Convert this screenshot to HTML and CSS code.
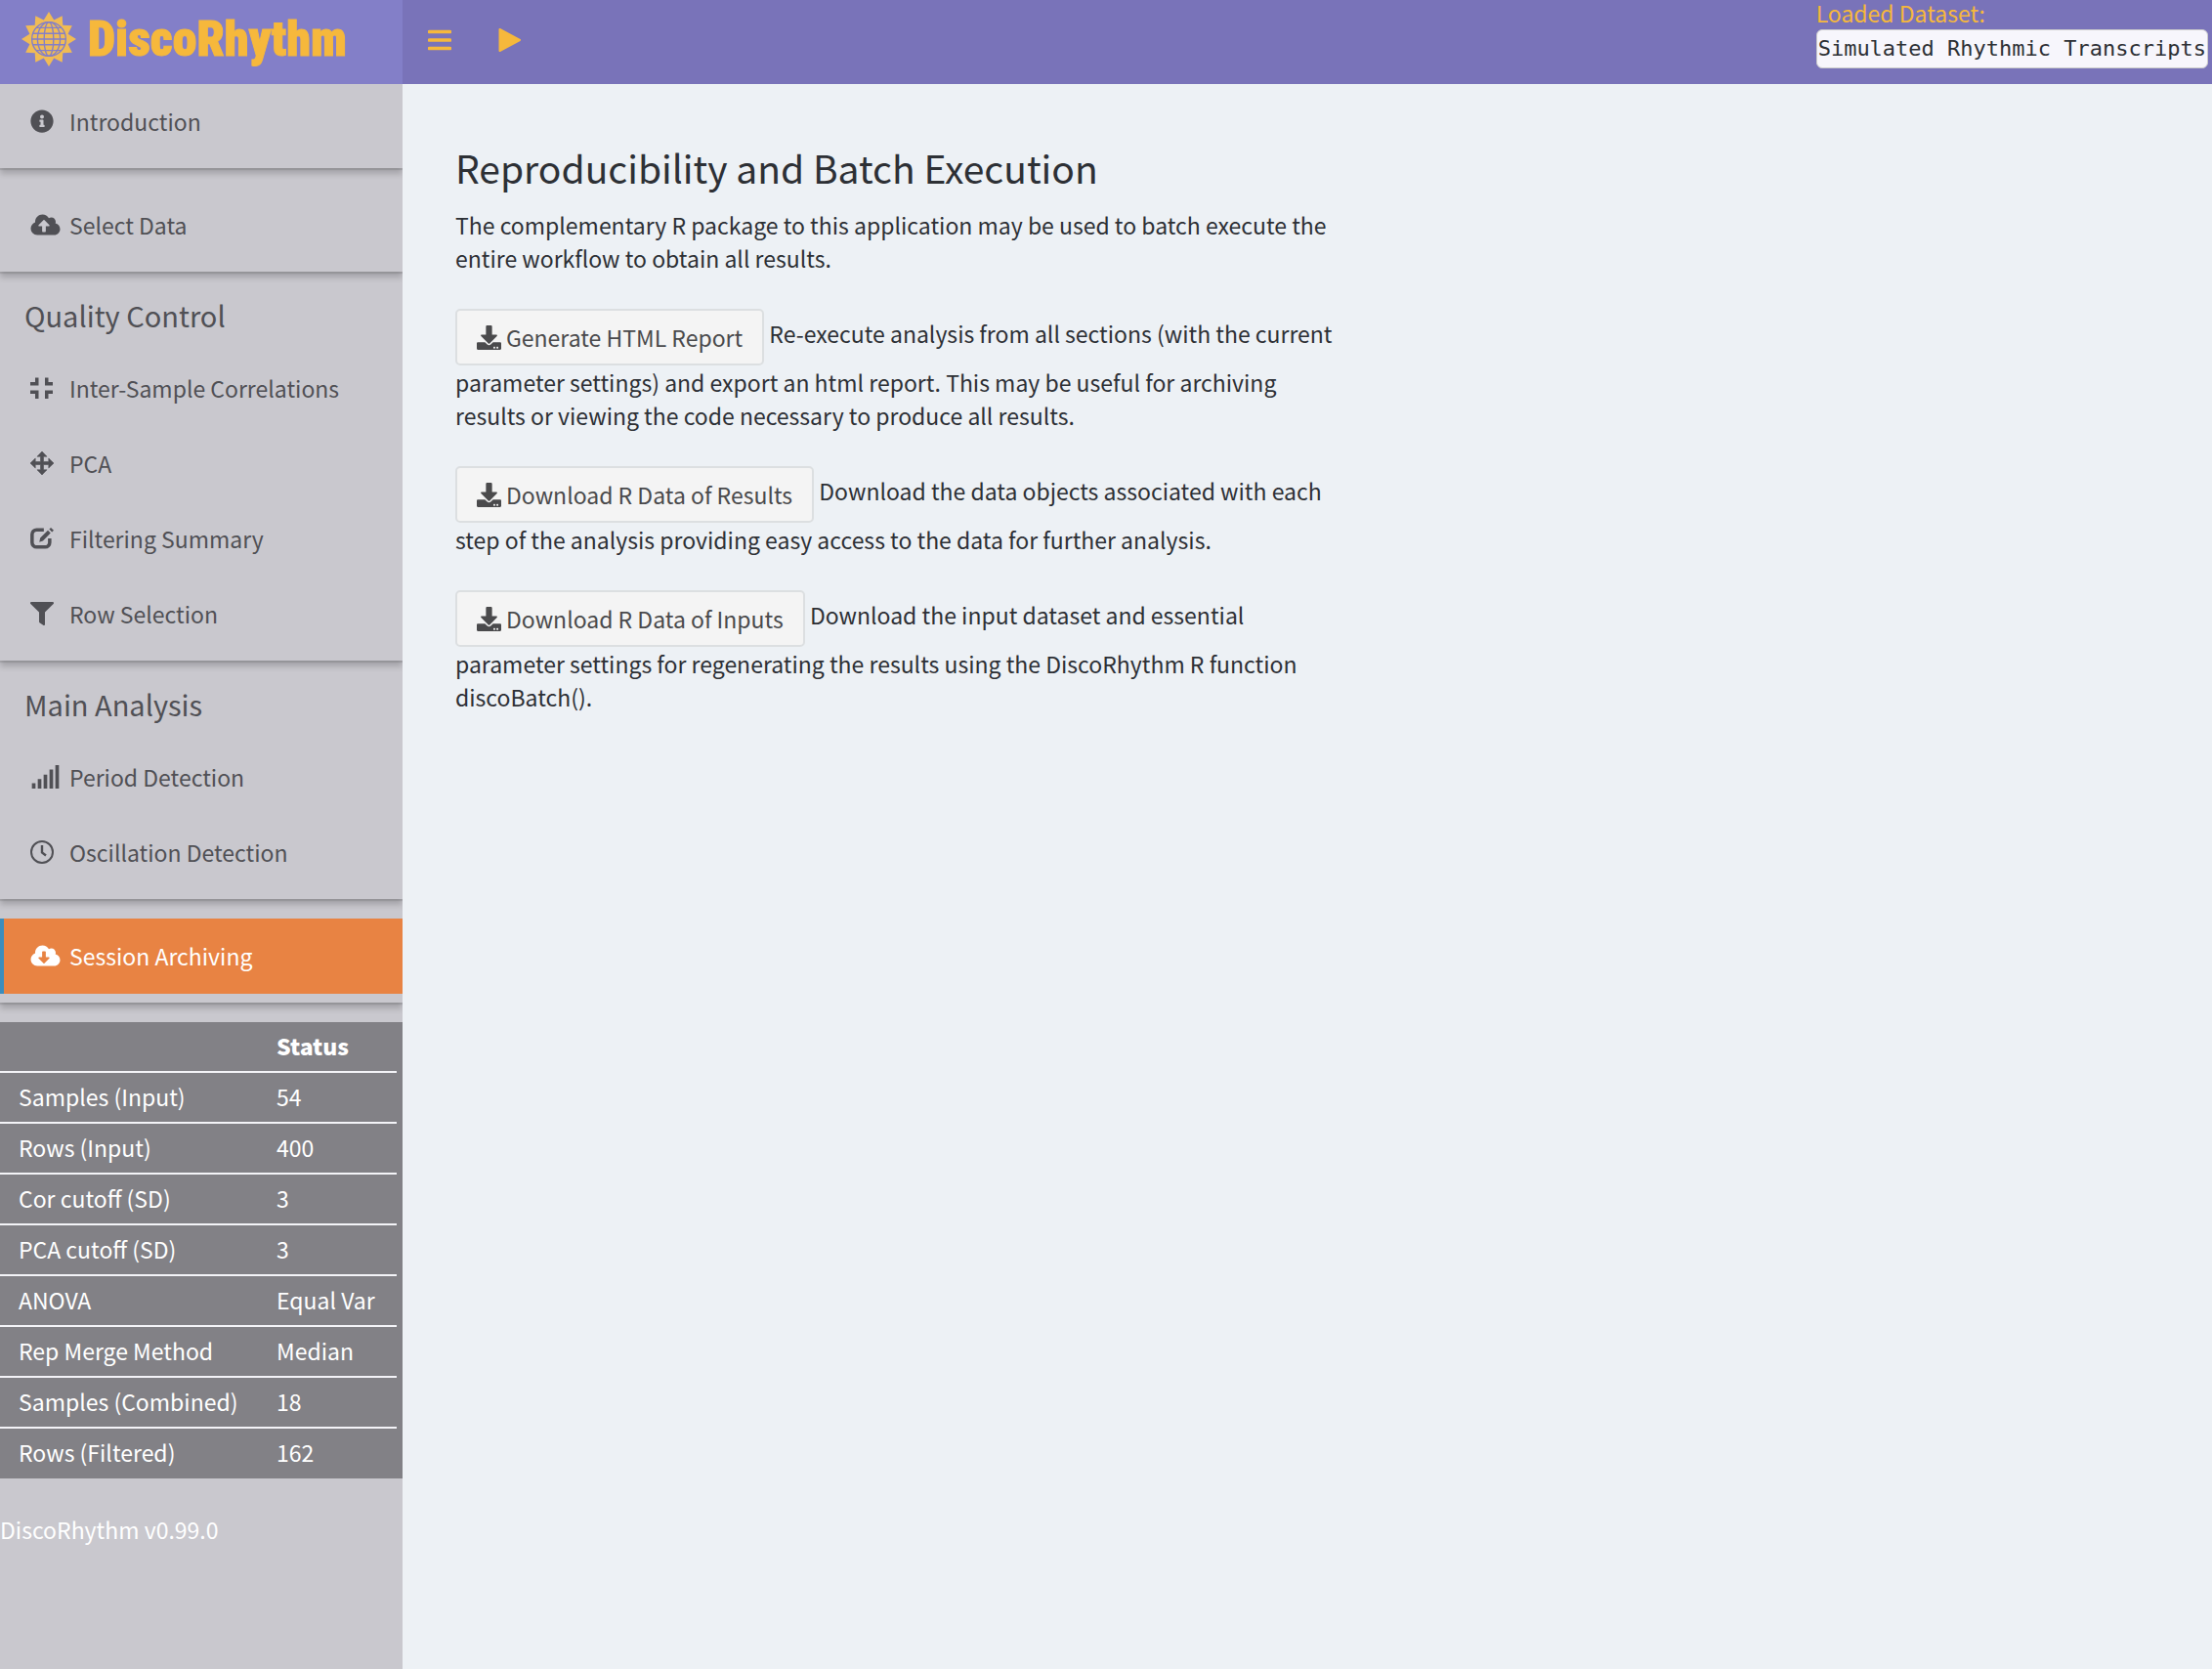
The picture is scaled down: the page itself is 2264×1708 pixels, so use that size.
FILE: index.html
```html
<!DOCTYPE html>
<html lang="en">
<head>
<meta charset="utf-8">
<title>DiscoRhythm</title>
<link rel="stylesheet" href="styles.css">
</head>
<body>
<svg class="defs" aria-hidden="true">
  <symbol id="info" viewBox="0 0 512 512"><path d="M256 8C119.043 8 8 119.083 8 256c0 136.997 111.043 248 248 248s248-111.003 248-248C504 119.083 392.957 8 256 8zm0 110c23.196 0 42 18.804 42 42s-18.804 42-42 42-42-18.804-42-42 18.804-42 42-42zm56 254c0 6.627-5.373 12-12 12h-88c-6.627 0-12-5.373-12-12v-24c0-6.627 5.373-12 12-12h12v-64h-12c-6.627 0-12-5.373-12-12v-24c0-6.627 5.373-12 12-12h64c6.627 0 12 5.373 12 12v100h12c6.627 0 12 5.373 12 12v24z"/></symbol>
  <symbol id="cloud-up" viewBox="0 0 640 512"><path d="M537.6 226.6c4.1-10.7 6.4-22.4 6.4-34.6 0-53-43-96-96-96-19.7 0-38.1 6-53.3 16.2C367 64.2 315.3 32 256 32c-88.4 0-160 71.6-160 160 0 2.7.1 5.4.2 8.1C40.2 219.8 0 273.2 0 336c0 79.5 64.5 144 144 144h368c70.7 0 128-57.3 128-128 0-61.9-44-113.6-102.4-125.4zM393.4 288H328v112c0 8.8-7.2 16-16 16h-48c-8.8 0-16-7.2-16-16V288h-65.4c-14.3 0-21.4-17.2-11.3-27.4l105.4-105.4c6.2-6.2 16.4-6.2 22.6 0l105.4 105.4c10.1 10.2 2.9 27.4-11.3 27.4z"/></symbol>
  <symbol id="cloud-down" viewBox="0 0 640 512"><path d="M537.6 226.6c4.1-10.7 6.4-22.4 6.4-34.6 0-53-43-96-96-96-19.7 0-38.1 6-53.3 16.2C367 64.2 315.3 32 256 32c-88.4 0-160 71.6-160 160 0 2.7.1 5.4.2 8.1C40.2 219.8 0 273.2 0 336c0 79.5 64.5 144 144 144h368c70.7 0 128-57.3 128-128 0-61.9-44-113.6-102.4-125.4zm-132.9 88.7L299.3 420.7c-6.2 6.2-16.4 6.2-22.6 0L171.3 315.3c-10.1-10.1-2.9-27.3 11.3-27.3H248V176c0-8.8 7.2-16 16-16h48c8.8 0 16 7.2 16 16v112h65.4c14.2 0 21.4 17.2 11.3 27.3z"/></symbol>
  <symbol id="compress" viewBox="0 0 24 24"><path d="M0 6h5V1.500h3.500v8H0zM15 1.500h3.500V6h4.500v3.500h-8zM0 14.500h8.500v8.500H5v-5H0zM15 14.500h8v3.500h-4.500v5H15z"/></symbol>
  <symbol id="arrows" viewBox="0 0 24 24"><path d="M12 0l5 5.200h-3.500v5.300h5.300V7L24 12l-5.200 5v-3.500h-5.300v5.300H17L12 24l-5-5.200h3.500v-5.300H5.200V17L0 12l5.200-5v3.500h5.300V5.200H7z" stroke="currentColor" stroke-width=".6" stroke-linejoin="round"/></symbol>
  <symbol id="edit" viewBox="0 0 26 24"><path d="M15 2.500H7A5 5 0 0 0 2 7.500v9a5 5 0 0 0 5 5h9.500a5 5 0 0 0 5-5V12" fill="none" stroke="currentColor" stroke-width="3.800"/><path d="M10 16l1-4.500L19.500 3l3 3-8.500 8.700zM21 1.800L22.800 0 26 3l-2 2z"/></symbol>
  <symbol id="filter" viewBox="0 0 512 512"><path d="M488 0H24C2.700 0-8 25.900 7.100 41L192 225.900V432c0 7.800 3.800 15.200 10.200 19.700l80 56C298 518.700 320 507.500 320 488V225.900L504.900 41C520 25.900 509.300 0 488 0z"/></symbol>
  <symbol id="signal" viewBox="0 0 30 26"><path d="M0 20h4v6H0zM6.500 15.500h4V26h-4zM13 10.500h4V26h-4zM19.500 5h4v21h-4zM26 0h4v26h-4z"/></symbol>
  <symbol id="clock" viewBox="0 0 24 24"><g fill="none" stroke="currentColor"><circle cx="12" cy="12" r="11" stroke-width="2"/><path d="M12 5v7.500l4 3" stroke-width="2.400"/></g></symbol>
  <symbol id="download" viewBox="0 0 512 512"><path d="M216 0h80c13.300 0 24 10.700 24 24v168h87.700c17.800 0 26.700 21.500 14.100 34.100L269.700 378.300c-7.500 7.500-19.800 7.500-27.300 0L90.100 226.100c-12.600-12.600-3.700-34.100 14.100-34.100H192V24c0-13.300 10.700-24 24-24zm296 376v112c0 13.300-10.700 24-24 24H24c-13.300 0-24-10.700-24-24V376c0-13.300 10.700-24 24-24h146.700l49 49c20.100 20.100 52.500 20.100 72.600 0l49-49H488c13.300 0 24 10.700 24 24zm-124 88c0-11-9-20-20-20s-20 9-20 20 9 20 20 20 20-9 20-20zm64 0c0-11-9-20-20-20s-20 9-20 20 9 20 20 20 20-9 20-20z"/></symbol>
</svg>
<header class="topbar">
  <a class="brand" href="#">
    <svg class="sun" viewBox="-29 -29 58 58" aria-hidden="true">
      <path class="rays" d="M0-29L5.400-20.300 14.200-24.700 14.800-14.800 24.700-14.200 20.300-5.400 29 0 20.300 5.400 24.700 14.200 14.800 14.800 14.200 24.700 5.400 20.300 0 29-5.400 20.300-14.200 24.700-14.800 14.800-24.700 14.200-20.300 5.400-29 0-20.300-5.400-24.700-14.200-14.800-14.800-14.200-24.700-5.400-20.300z"/>
      <g class="globe"><circle r="18"/><ellipse rx="12" ry="18"/><ellipse rx="5" ry="18"/><path d="M-18 0H18M-17-6H17M-17 6H17M-13-12H13M-13 12H13"/></g>
    </svg>
    <span>DiscoRhythm</span>
  </a>
  <div class="tools">
    <button class="tool" type="button" aria-label="Toggle navigation"><svg viewBox="0 0 24 24"><path d="M1.500 3.500h21M1.500 12h21M1.500 20.500h21" fill="none" stroke="currentColor" stroke-width="3.600" stroke-linecap="round"/></svg></button>
    <button class="tool" type="button" aria-label="Play"><svg viewBox="0 0 24 24"><path d="M1.500 1L22 12 1.500 23z" stroke="currentColor" stroke-width="2" stroke-linejoin="round"/></svg></button>
  </div>
  <div class="dataset"><span>Loaded Dataset:</span><output>Simulated Rhythmic Transcripts</output></div>
</header>
<div class="page">
  <aside class="sidebar">
    <nav>
      <div class="group"><a class="item" href="#"><svg class="icon"><use href="#info"/></svg>Introduction</a></div>
      <div class="group"><a class="item" href="#"><svg class="icon wide"><use href="#cloud-up"/></svg>Select Data</a></div>
      <div class="group">
        <h2>Quality Control</h2>
        <a class="item" href="#"><svg class="icon"><use href="#compress"/></svg>Inter-Sample Correlations</a>
        <a class="item" href="#"><svg class="icon"><use href="#arrows"/></svg>PCA</a>
        <a class="item" href="#"><svg class="icon"><use href="#edit"/></svg>Filtering Summary</a>
        <a class="item" href="#"><svg class="icon"><use href="#filter"/></svg>Row Selection</a>
      </div>
      <div class="group">
        <h2>Main Analysis</h2>
        <a class="item" href="#"><svg class="icon wide"><use href="#signal"/></svg>Period Detection</a>
        <a class="item" href="#"><svg class="icon"><use href="#clock"/></svg>Oscillation Detection</a>
      </div>
      <div class="group"><a class="item active" href="#" aria-current="page"><svg class="icon wide"><use href="#cloud-down"/></svg>Session Archiving</a></div>
    </nav>
    <div class="status">
      <table>
        <thead><tr><th></th><th scope="col">Status</th></tr></thead>
        <tbody>
          <tr><td>Samples (Input)</td><td>54</td></tr>
          <tr><td>Rows (Input)</td><td>400</td></tr>
          <tr><td>Cor cutoff (SD)</td><td>3</td></tr>
          <tr><td>PCA cutoff (SD)</td><td>3</td></tr>
          <tr><td>ANOVA</td><td>Equal Var</td></tr>
          <tr><td>Rep Merge Method</td><td>Median</td></tr>
          <tr><td>Samples (Combined)</td><td>18</td></tr>
          <tr><td>Rows (Filtered)</td><td>162</td></tr>
        </tbody>
      </table>
    </div>
    <p class="version">DiscoRhythm v0.99.0</p>
  </aside>
  <main>
    <h1>Reproducibility and Batch Execution</h1>
    <p>The complementary R package to this application may be used to batch execute the entire workflow to obtain all results.</p>
    <p><button class="btn" type="button"><svg><use href="#download"/></svg>Generate HTML Report</button> Re-execute analysis from all sections (with the current parameter settings) and export an html report. This may be useful for archiving results or viewing the code necessary to produce all results.</p>
    <p><button class="btn" type="button"><svg><use href="#download"/></svg>Download R Data of Results</button> Download the data objects associated with each step of the analysis providing easy access to the data for further analysis.</p>
    <p><button class="btn" type="button"><svg><use href="#download"/></svg>Download R Data of Inputs</button> Download the input dataset and essential parameter settings for regenerating the results using the DiscoRhythm R function discoBatch().</p>
  </main>
</div>
</body>
</html>
```
FILE: styles.css
```css
* { box-sizing: border-box; }
body {
  margin: 0;
  min-height: 100vh;
  display: flex;
  flex-direction: column;
  font: 23px/34px "Noto Sans CJK SC", "Noto Sans", sans-serif;
  color: #2d3035;
  background: #edf1f5;
}
.defs { position: absolute; width: 0; height: 0; }
svg { fill: currentColor; }

.topbar { display: flex; height: 86px; background: #7973b9; color: #f6b83c; }
.brand {
  display: flex;
  align-items: center;
  gap: 12px;
  width: 412px;
  padding: 0 22px 7px;
  background: #837fc8;
  color: inherit;
  text-decoration: none;
  font: 900 50px/70px "Roboto Condensed", "Noto Sans CJK SC", sans-serif;
  -webkit-text-stroke: 1px currentColor;
}
.sun { width: 56px; height: 58px; flex: none; }
.rays { fill: #f0bb55; }
.globe { fill: none; stroke: #837fc8; stroke-width: 1.4; }
.tools { display: flex; flex: 1; align-items: center; gap: 48px; padding: 0 26px 4px; }
.tool { padding: 0; border: 0; background: none; color: inherit; height: 24px; }
.tool svg { display: block; width: 24px; height: 24px; }
.dataset { display: flex; flex-direction: column; gap: 4px; padding-right: 4px; line-height: 26px; }
.dataset output {
  padding: 0 1px;
  border: 1px solid #ccc;
  border-radius: 6px;
  background: #f7f6fc;
  color: #2d3035;
  font: 22px/38px "DejaVu Sans Mono", monospace;
}

.page { display: flex; flex: 1; }
.sidebar { width: 412px; flex: none; overflow: hidden; background: #c9c8ce; }
.group {
  margin-bottom: 20px;
  padding-bottom: 9px;
  background: #c9c8ce;
  box-shadow: 0 2px 1px rgba(0, 0, 0, .1), 0 6px 6px rgba(0, 0, 0, .18);
}
.group h2 { margin: 0; padding: 4px 25px 17px; font-size: 29px; line-height: 40px; font-weight: 400; color: #505055; }
.item {
  display: flex;
  align-items: center;
  height: 77px;
  padding: 0 0 1px 27px;
  border-left: 4px solid transparent;
  color: #505055;
  text-decoration: none;
}
.active { border-color: #3c8dbc; background: #e88343; color: #fff; }
.icon { width: 24px; height: 24px; margin: 0 16px 0 0; flex: none; }
.icon.wide { width: 31px; margin-right: 9px; }
.status { background: #828186; color: #fff; padding-right: 6px; }
table { width: 100%; border-collapse: collapse; }
th, td { height: 52px; padding: 0 0 3px 19px; text-align: left; line-height: 34px; }
th { height: 51px; font-weight: 900; }
th:first-child, td:first-child { width: 264px; }
td { border-top: 2px solid #f4f4f8; }
.version { margin: 35px 0 0; color: #fff; }

main { flex: 1; padding: 59px 54px; }
h1 { margin: 0 0 16px; font-size: 39px; line-height: 52px; font-weight: 400; }
p { margin: 0 0 35px; }
main p { max-width: 912px; }
.btn {
  height: 58px;
  padding: 0 20px;
  border: 2px solid #dcdfe1;
  border-radius: 5px;
  background: #f4f4f4;
  color: #4a4a4c;
  font: inherit;
  vertical-align: middle;
}
.btn svg { width: 25px; height: 25px; margin-right: 5px; vertical-align: -3px; }
```
